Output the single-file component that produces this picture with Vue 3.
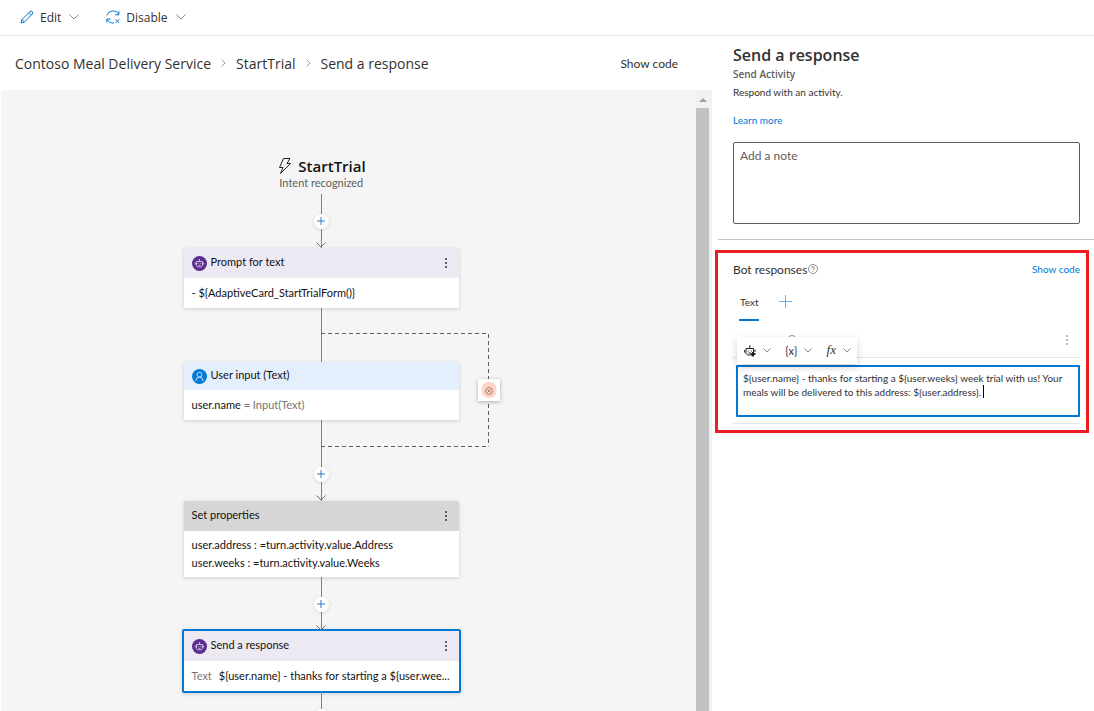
<script setup>
import { ref } from 'vue'

const note = ref('')
const reply = ref(
  '${user.name} - thanks for starting a ${user.weeks} week trial with us! Your meals will be delivered to this address: ${user.address}.'
)
const preview = '${user.name} - thanks for starting a ${user.wee...'
const crumbs = ['Contoso Meal Delivery Service', 'StartTrial', 'Send a response']
</script>

<template>
  <div class="app">
    <header class="toolbar">
      <button class="tool" type="button">
        <svg class="tool-icon" viewBox="0 0 14 14">
          <path d="M1 13 L2 9.5 L10 1.6 Q11.2 0.6 12.4 1.8 Q13.4 2.9 12.3 4 L4.4 12 Z M2 9.5 L4.4 12 M9 2.6 L11.4 5" />
        </svg>
        <span>Edit</span>
        <svg class="chevron" viewBox="0 0 10 6"><path d="M0.5 0.5 L5 5 L9.5 0.5" /></svg>
      </button>
      <button class="tool" type="button">
        <svg class="tool-icon" viewBox="0 0 14 14">
          <path d="M1 5.5 A6 5.5 0 0 1 12.5 4.5 M12.8 1 V4.8 H9 M0.8 12.5 V9 H4.5 M1.2 9.2 A6 5 0 0 0 8 13 M9.5 9.3 L13.2 13 M13.2 9.3 L9.5 13" />
        </svg>
        <span>Disable</span>
        <svg class="chevron" viewBox="0 0 10 6"><path d="M0.5 0.5 L5 5 L9.5 0.5" /></svg>
      </button>
    </header>

    <div class="work">
      <main class="editor">
        <div class="crumb-bar">
          <nav class="crumbs">
            <template v-for="(crumb, i) in crumbs" :key="crumb">
              <svg v-if="i" class="crumb-sep" viewBox="0 0 5 8"><path d="M0.5 0.5 L4 4 L0.5 7.5" /></svg>
              <a href="#">{{ crumb }}</a>
            </template>
          </nav>
          <button class="show-code" type="button">Show code</button>
        </div>

        <div class="canvas">
          <div class="flow">
            <div class="trigger">
              <h2>
                <svg viewBox="0 0 14 18"><path d="M5.5 1.5 H12 L9 6.5 H12.5 L2.5 16.5 L5 10.5 H1.5 Z" /></svg>
                StartTrial
              </h2>
              <p>Intent recognized</p>
            </div>

            <div class="link">
              <button class="add" type="button" aria-label="Add action">
                <svg viewBox="0 0 8 8"><path d="M4 0 V8 M0 4 H8" /></svg>
              </button>
              <svg class="head" viewBox="0 0 10 6"><path d="M0.5 0.5 L5 5 L9.5 0.5" /></svg>
            </div>

            <article class="card">
              <header class="bot">
                <svg class="badge" viewBox="0 0 15 15">
                  <circle cx="7.5" cy="7.5" r="7.5" fill="#5c2d91" />
                  <path d="M4.5 5.5 H10.5 V9.5 L9.5 10.8 H5.5 L4.5 9.5 Z M7.5 3 V5.5 M3.3 6.5 V8.5 M11.7 6.5 V8.5 M6.2 7 V8 M8.8 7 V8 M6.5 9.3 H8.5" stroke="#e5dcf0" stroke-width="0.8" fill="none" />
                </svg>
                <span>Prompt for text</span>
                <button class="more" type="button" aria-label="More"><i /><i /><i /></button>
              </header>
              <p>- ${AdaptiveCard_StartTrialForm()}</p>
            </article>

            <div class="branch">
              <div class="link" />
              <article class="card">
                <header class="user">
                  <svg class="badge" viewBox="0 0 15 15">
                    <circle cx="7.5" cy="7.5" r="7.5" fill="#0078d4" />
                    <circle cx="7.5" cy="5.7" r="2.4" stroke="#d6eaff" stroke-width="0.9" fill="none" />
                    <path d="M3.8 12 Q4 8.2 7.5 8.2 Q11 8.2 11.2 12" stroke="#d6eaff" stroke-width="0.9" fill="none" />
                  </svg>
                  <span>User input (Text)</span>
                </header>
                <p>user.name <span class="muted">= Input(Text)</span></p>
              </article>
              <div class="link long">
                <button class="add" type="button" aria-label="Add action">
                  <svg viewBox="0 0 8 8"><path d="M4 0 V8 M0 4 H8" /></svg>
                </button>
                <svg class="head" viewBox="0 0 10 6"><path d="M0.5 0.5 L5 5 L9.5 0.5" /></svg>
              </div>
              <svg class="loop" viewBox="0 0 168 114">
                <path d="M0 0.5 H167.5 V113.5 M0 113.5 H167.5" />
              </svg>
              <button class="exit" type="button" aria-label="Invalid prompt">
                <svg viewBox="0 0 16 16">
                  <rect x="0.5" y="0" width="15" height="16" rx="7" fill="#ffd5c8" />
                  <circle cx="8" cy="9" r="3.4" stroke="#8b6f68" stroke-width="0.8" fill="none" />
                  <path d="M6.5 7.5 L9.5 10.5 M9.5 7.5 L6.5 10.5" stroke="#8b6f68" stroke-width="0.8" />
                </svg>
              </button>
            </div>

            <article class="card">
              <header class="plain">
                <span>Set properties</span>
                <button class="more" type="button" aria-label="More"><i /><i /><i /></button>
              </header>
              <p class="lines">user.address : =turn.activity.value.Address<br />user.weeks : =turn.activity.value.Weeks</p>
            </article>

            <div class="link">
              <button class="add" type="button" aria-label="Add action">
                <svg viewBox="0 0 8 8"><path d="M4 0 V8 M0 4 H8" /></svg>
              </button>
              <svg class="head" viewBox="0 0 10 6"><path d="M0.5 0.5 L5 5 L9.5 0.5" /></svg>
            </div>

            <article class="card selected">
              <header class="bot">
                <svg class="badge" viewBox="0 0 15 15">
                  <circle cx="7.5" cy="7.5" r="7.5" fill="#5c2d91" />
                  <path d="M4.5 5.5 H10.5 V9.5 L9.5 10.8 H5.5 L4.5 9.5 Z M7.5 3 V5.5 M3.3 6.5 V8.5 M11.7 6.5 V8.5 M6.2 7 V8 M8.8 7 V8 M6.5 9.3 H8.5" stroke="#e5dcf0" stroke-width="0.8" fill="none" />
                </svg>
                <span>Send a response</span>
                <button class="more" type="button" aria-label="More"><i /><i /><i /></button>
              </header>
              <p class="clip"><span class="muted kind">Text</span>{{ preview }}</p>
            </article>

            <div class="link last">
              <button class="add" type="button" aria-label="Add action">
                <svg viewBox="0 0 8 8"><path d="M4 0 V8 M0 4 H8" /></svg>
              </button>
            </div>
          </div>
          <div class="scroll">
            <svg viewBox="0 0 8 4"><path d="M0 4 L4 0 L8 4 Z" /></svg>
            <div class="thumb" />
          </div>
        </div>
      </main>

      <aside class="panel">
        <div class="intro">
          <h1>Send a response</h1>
          <h3>Send Activity</h3>
          <p>Respond with an activity.</p>
          <a href="#">Learn more</a>
          <textarea v-model="note" placeholder="Add a note" aria-label="Add a note" />
        </div>

        <section class="responses">
          <div class="resp-head">
            <h2>Bot responses</h2>
            <svg class="help" viewBox="0 0 10 10">
              <circle cx="5" cy="5" r="4.5" />
              <path d="M3.5 4 Q3.5 2.6 5 2.6 Q6.5 2.6 6.5 3.9 Q6.5 4.7 5 5.3 V6.2 M5 7 V7.8" />
            </svg>
            <a href="#">Show code</a>
          </div>
          <div class="tabs">
            <button class="tab" type="button">Text</button>
            <button class="new-tab" type="button" aria-label="Add">
              <svg viewBox="0 0 13 13"><path d="M6.5 0 V13 M0 6.5 H13" /></svg>
            </button>
          </div>
          <div class="item">
            <svg class="help" viewBox="0 0 10 10"><circle cx="5" cy="5" r="4.5" /></svg>
            <button class="more pale" type="button" aria-label="More"><i /><i /><i /></button>
          </div>
          <div class="reply">
            <textarea v-model="reply" aria-label="Response text" spellcheck="false" />
            <span class="caret" />
            <div class="insert">
              <button type="button" aria-label="Templates">
                <svg class="bot-icon" viewBox="0 0 12 13">
                  <path d="M2 4.5 H9.5 V9.5 L8 11 H3.5 L2 9.5 Z M5.8 1 V4.5 M0.6 6 V8.5 M11 5.5 V8 M4.2 6.5 V7.5 M7.4 6.5 V7.5 M4.5 9 H7" />
                  <path d="M9 8 V12.5 M7 10 H11.5" stroke-width="2" />
                </svg>
                <svg class="drop" viewBox="0 0 8 5"><path d="M0.5 0.5 L4 4 L7.5 0.5" /></svg>
              </button>
              <button type="button">
                <span>{x}</span>
                <svg class="drop" viewBox="0 0 8 5"><path d="M0.5 0.5 L4 4 L7.5 0.5" /></svg>
              </button>
              <button type="button">
                <span class="fx">fx</span>
                <svg class="drop" viewBox="0 0 8 5"><path d="M0.5 0.5 L4 4 L7.5 0.5" /></svg>
              </button>
            </div>
          </div>
        </section>
      </aside>
    </div>
  </div>
</template>

<style>
body { margin: 0; background: #fff; }
</style>

<style scoped>
.app {
  height: 100vh;
  display: flex;
  flex-direction: column;
  overflow: hidden;
  font-family: Lato, "Open Sans", sans-serif;
  font-size: 10px;
  color: #323130;
}
.app * { box-sizing: border-box; }
h1, h2, h3, p { margin: 0; font-weight: 400; }
a { color: #0078d4; text-decoration: none; }
button {
  font: inherit;
  color: inherit;
  background: none;
  border: 0;
  padding: 0;
  display: flex;
  align-items: center;
}
svg { display: block; fill: none; flex: none; }

.toolbar {
  height: 36px;
  flex: none;
  display: flex;
  align-items: center;
  gap: 27px;
  padding: 0 20px 1px;
  border-bottom: 1px solid #eaeaea;
  font-family: "Open Sans", "Noto Sans", sans-serif;
}
.tool { font-size: 12px; gap: 6px; }
.tool span { margin-right: 2px; }
.tool-icon { width: 14px; height: 14px; stroke: #0078d4; }
.chevron { width: 10px; height: 6px; stroke: #8a8886; }

.work { flex: 1; min-height: 0; display: flex; }
.editor { flex: 1; min-width: 0; display: flex; flex-direction: column; padding-left: 1px; }
.crumb-bar {
  height: 54px;
  flex: none;
  display: flex;
  align-items: center;
  justify-content: space-between;
  padding: 0 34px 0 14px;
}
.crumbs {
  display: flex;
  align-items: center;
  gap: 10px;
  font-family: "Open Sans", "Noto Sans", sans-serif;
  font-size: 14px;
}
.crumbs a { color: #323130; }
.crumb-sep { width: 5px; height: 8px; stroke: #a19f9d; }
.show-code { font-size: 12px; }

.canvas { flex: 1; min-height: 0; display: flex; background: #f5f5f5; }
.flow {
  flex: 1;
  min-width: 0;
  display: flex;
  flex-direction: column;
  align-items: center;
  padding: 66px 54px 0 0;
  font-size: 11px;
  color: #111;
  overflow: hidden;
}
.flow > * { flex: none; }
.trigger { height: 38px; padding-left: 2px; }
.trigger h2 {
  display: flex;
  align-items: center;
  gap: 6px;
  font-family: "Open Sans", "Noto Sans", sans-serif;
  font-size: 15px;
  font-weight: 600;
  line-height: 20px;
}
.trigger h2 svg { width: 14px; height: 18px; stroke: #222; }
.trigger p { line-height: 14px; padding-left: 1px; color: #605e5c; }

.link {
  position: relative;
  height: 54px;
  display: flex;
  justify-content: center;
  align-items: center;
  background: linear-gradient(#808080, #808080) center / 1px 100% no-repeat;
}
.link.long { height: 81px; padding-top: 27px; }
.link.last { height: 50px; }
.add {
  width: 15px;
  height: 15px;
  border-radius: 50%;
  background: #fff;
  justify-content: center;
  box-shadow: 0 1px 4px rgba(0, 0, 0, 0.12);
}
.add svg { width: 8px; height: 8px; stroke: #2b7cd3; }
.head { position: absolute; bottom: 0; width: 10px; height: 6px; stroke: #707070; }

.card { width: 275px; background: #fff; box-shadow: 0 1px 4px rgba(0, 0, 0, 0.16); }
.card header {
  height: 30px;
  display: flex;
  align-items: center;
  gap: 4px;
  padding: 0 10px 0 8px;
}
.card header span { padding-bottom: 3px; }
.card header.bot { background: #ede9f3; }
.card header.user { background: #e3effd; height: 28px; }
.card header.plain { background: #d6d6d6; }
.badge { width: 15px; height: 15px; }
.card p { padding: 6px 8px; line-height: 18px; }
.card p.lines { padding: 5px 8px; }
.card p.clip { white-space: nowrap; }
.card.selected { margin: -2px 0; width: 279px; border: 2px solid #0078d4; border-radius: 2px; }
.muted { color: #767472; }
.kind { margin-right: 7px; }
.more { margin-left: auto; flex-direction: column; gap: 2px; width: 6px; }
.more i { width: 2px; height: 2px; background: #333; border-radius: 50%; }
.more.pale i { background: #a19f9d; }

.branch { position: relative; }
.loop {
  position: absolute;
  top: 25px;
  left: 137px;
  width: 168px;
  height: 114px;
  stroke: #5f5f5f;
  stroke-dasharray: 4 3;
}
.exit {
  position: absolute;
  top: 71px;
  left: 294px;
  width: 22px;
  height: 22px;
  justify-content: center;
  background: #fff;
  box-shadow: 0 1px 4px rgba(0, 0, 0, 0.3);
}
.exit svg { width: 16px; height: 16px; }

.scroll {
  width: 17px;
  flex: none;
  display: flex;
  flex-direction: column;
  align-items: center;
  padding: 8px 3px 0 1px;
  gap: 6px;
  background: #f1f1f1;
}
.scroll svg { width: 8px; height: 4px; fill: #a0a0a0; }
.thumb { width: 13px; flex: 1; background: #c1c1c1; }

.panel { width: 382px; flex: none; }
.intro { padding: 7px 14px 15px 21px; }
.intro h1 {
  font-family: "Open Sans", "Noto Sans", sans-serif;
  font-size: 16px;
  font-weight: 600;
  line-height: 24px;
}
.intro h3 {
  font-family: "Open Sans", "Noto Sans", sans-serif;
  font-size: 10px;
  font-weight: 600;
  line-height: 14px;
  color: #605e5c;
}
.intro p { line-height: 14px; margin: 4px 0 14px; }
.intro a { display: block; line-height: 14px; }
.intro textarea {
  display: block;
  width: 100%;
  height: 82px;
  margin-top: 15px;
  padding: 4px 6px;
  border: 1px solid #605e5c;
  border-radius: 2px;
  resize: none;
  font: 12px/18px Lato, "Open Sans", sans-serif;
}
.intro textarea::placeholder { color: #605e5c; }

.responses {
  position: relative;
  margin: 11px 5px 0 3px;
  padding: 7px 5px 6px 15px;
  border: 3px solid #ed1c24;
}
.responses::before {
  content: "";
  position: absolute;
  inset: -14px -8px auto 0;
  height: 1px;
  background: #c8c6c4;
}
.resp-head { display: flex; align-items: center; height: 18px; padding-right: 1px; }
.resp-head h2 { font-size: 12px; }
.resp-head a { margin-left: auto; }
.help { width: 10px; height: 10px; margin-left: 1px; stroke: #7a7876; stroke-width: 0.8; }
.tabs { display: flex; align-items: flex-start; gap: 20px; padding-left: 6px; margin-top: 15px; }
.tab { height: 28px; padding: 0 1px 8px; border-bottom: 2px solid #0078d4; }
.new-tab svg { width: 13px; height: 13px; margin-top: 2px; stroke: #6cb0e8; }
.item {
  height: 37px;
  display: flex;
  align-items: center;
  padding: 2px 11px 0 53px;
  border-bottom: 1px solid #e6e6e6;
}
.reply { position: relative; padding: 7px 1px 6px 3px; border-bottom: 1px solid #e6e6e6; }
.reply textarea {
  display: block;
  width: 100%;
  height: 52px;
  padding: 4px 5px;
  border: 2px solid #0078d4;
  border-radius: 1px;
  resize: none;
  overflow: hidden;
  color: #323130;
  font: 10px/14px Lato, "Open Sans", sans-serif;
}
.caret { position: absolute; top: 27px; left: 250px; width: 1px; height: 13px; background: #000; }
.insert {
  position: absolute;
  top: -21px;
  left: 4px;
  width: 120px;
  height: 27px;
  display: flex;
  justify-content: space-between;
  padding: 0 6px 1px 7px;
  background: #fff;
  box-shadow: 0 3px 8px rgba(0, 0, 0, 0.18);
  font-size: 11px;
}
.insert button { gap: 7px; }
.bot-icon { width: 12px; height: 13px; stroke: #222; }
.drop { width: 8px; height: 5px; stroke: #8a8886; }
.fx { font: italic 13px "Liberation Serif", serif; }
</style>
